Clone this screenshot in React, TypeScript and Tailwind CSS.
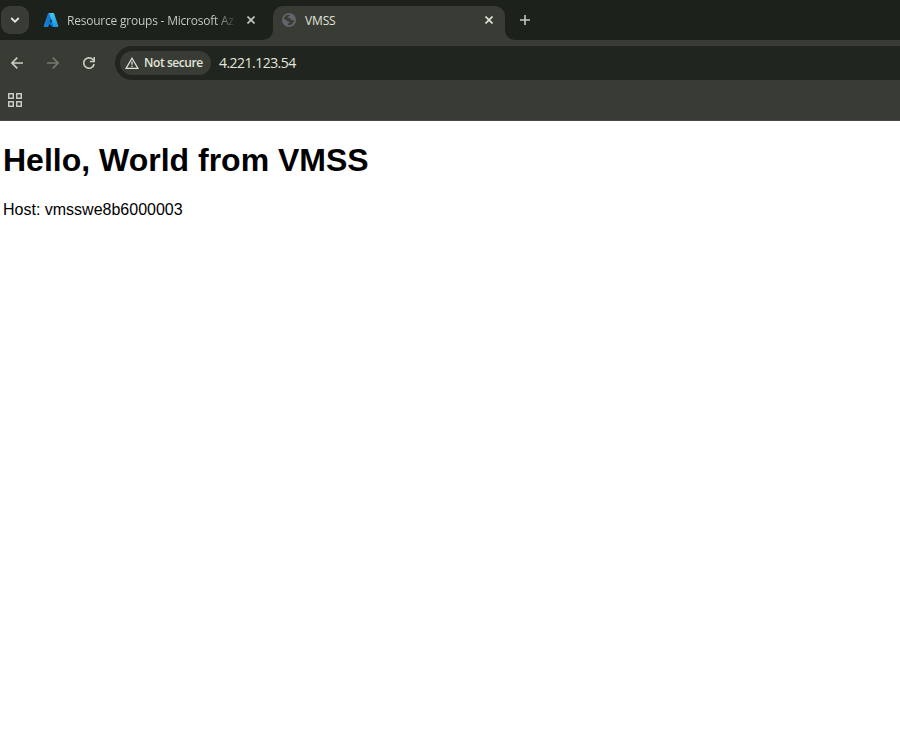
import React from "react";

function AzureLogo() {
  return (
    <svg className="block size-4 shrink-0" viewBox="0 0 96 96">
      <defs>
        <linearGradient id="azLeft" x1="0" y1="0" x2="0" y2="1">
          <stop offset="0" stopColor="#1f6fc0" />
          <stop offset="1" stopColor="#1182dc" />
        </linearGradient>
        <linearGradient id="azRight" x1="0" y1="0" x2="0" y2="1">
          <stop offset="0" stopColor="#3ccbf4" />
          <stop offset="1" stopColor="#2892df" />
        </linearGradient>
      </defs>
      <path fill="url(#azLeft)" d="M33.3 6.5h26L32.3 86.600a4.100 4.100 0 0 1-3.900 2.900H8.100a4.100 4.100 0 0 1-3.900-5.500L29.400 9.300a4.100 4.100 0 0 1 3.900-2.800z" />
      <path fill="#0078d4" d="M71.200 60.300H29.900a1.900 1.900 0 0 0-1.300 3.300l26.500 24.800a4.200 4.200 0 0 0 2.800 1.100h23.400z" />
      <path fill="url(#azRight)" d="M66.600 9.400a4.100 4.100 0 0 0-3.900-2.900H33.600a4.100 4.100 0 0 1 3.900 2.900L62.800 84a4.100 4.100 0 0 1-3.900 5.500H88a4.100 4.100 0 0 0 3.900-5.500z" />
    </svg>
  );
}

function Globe() {
  return (
    <svg className="block size-[14px] shrink-0" viewBox="0 0 14 14">
      <circle cx="7" cy="7" r="7" fill="#60656b" />
      <path
        fill="#383c35"
        d="M1.900 6.200C2 4.200 3.300 2.500 5.200 1.900l2.300-.2c.5.700.1 1.300-.7 1.700-.9.300-1.300.8-.9 1.400.7.400 1.700 0 2.300.6.500.7.300 1.300 1.100 1.500.9.200 2 .1 2.800.5-.2 1.700-1.300 3.200-2.800 4-.9.500-2 .7-3 .6-.6-.4-.4-1.200.2-1.600.7-.3 1.200-.8.900-1.500-.5-.6-1.500-.3-2.200-.7-.6-.5-.5-1.200-1.200-1.500-.7-.3-1.400-.2-2.100-.5z"
      />
    </svg>
  );
}

function Close({ className }: { className: string }) {
  return (
    <svg className={`block size-2 shrink-0 ${className}`} viewBox="0 0 8 8" fill="none" stroke="currentColor" strokeWidth="1.600">
      <path d="M.5.5l7 7M7.500.5l-7 7" />
    </svg>
  );
}

function TabStrip() {
  return (
    <div className="flex h-10 w-full bg-[#1c211b]">
      <button className="mt-1.5 ml-px flex size-7 items-center justify-center rounded-[9px] bg-[#383c35] text-[#e2e5dc]">
        <svg className="block h-[6px] w-2.5" viewBox="0 0 10 6" fill="none" stroke="currentColor" strokeWidth="1.800">
          <path d="M1.200 1L5 4.700 8.800 1" />
        </svg>
      </button>
      <div className="flex h-10 w-[244px] items-center pl-3.5">
        <AzureLogo />
        <div className="ml-2 w-[168px] whitespace-nowrap bg-linear-to-r from-[#cdd2c8] from-88% to-[#343932] bg-clip-text pt-0.5 text-[12px] leading-5 tracking-[-0.220px] text-transparent">
          Resource groups - Microsoft Az
        </div>
        <Close className="ml-3 text-[#c5cac0]" />
      </div>
      <div className="relative mt-1.5 flex h-[34px] w-[232px] items-center rounded-t-[10px] bg-[#383c35] pl-[9px]">
        <svg className="absolute bottom-0 -left-2.5 size-2.5" viewBox="0 0 10 10">
          <path d="M10 0v10H0A10 10 0 0 0 10 0z" fill="#383c35" />
        </svg>
        <svg className="absolute -right-2.5 bottom-0 size-2.5" viewBox="0 0 10 10">
          <path d="M0 0v10h10A10 10 0 0 1 0 0z" fill="#383c35" />
        </svg>
        <div className="flex h-7 w-full items-center self-start">
          <Globe />
          <span className="ml-[9px] w-[180px] pt-0.5 text-[12px] leading-5 tracking-[-0.150px] text-[#e0e3da]">VMSS</span>
          <Close className="text-[#e0e3da]" />
        </div>
      </div>
      <svg className="mt-[15px] ml-[15px] block size-2.5" viewBox="0 0 10 10" fill="none" stroke="#c5cac0" strokeWidth="1.600">
        <path d="M5 0v10M0 5h10" />
      </svg>
    </div>
  );
}

function Toolbar() {
  return (
    <div className="flex h-[46px] items-center bg-[#383c35] text-[#c9cdc3]">
      <svg className="ml-[11px] block size-3" viewBox="0 0 12 12" fill="none" stroke="currentColor" strokeWidth="1.600">
        <path d="M12 6H1M6.300.6L.9 6l5.400 5.400" />
      </svg>
      <svg className="ml-6 block size-3 text-[#747970]" viewBox="0 0 12 12" fill="none" stroke="currentColor" strokeWidth="1.600">
        <path d="M0 6h11M5.700.6L11.100 6l-5.400 5.400" />
      </svg>
      <svg className="ml-6 block size-3" viewBox="0 0 12 12" fill="none" stroke="currentColor" strokeWidth="1.600">
        <path d="M11.100 7A5.200 5.200 0 1 1 9.800 2.500L11 3.700" />
        <path d="M11.200 0v4.500H6.800" />
      </svg>
      <div className="ml-5 flex h-[34px] flex-1 items-center rounded-l-full bg-[#20251f] pl-[5px]">
        <div className="flex h-6 w-[91px] items-center rounded-full bg-[#383c35] pl-[5px] text-[#e2e5dc]">
          <svg className="block h-3 w-3.5 shrink-0" viewBox="0 0 14 12" fill="none" stroke="currentColor">
            <path d="M7 1.200L13 11.400H1z" strokeWidth="1.200" />
            <path d="M7 4.500v3.200M7 8.700V10" strokeWidth="1.300" />
          </svg>
          <span className="ml-[5px] whitespace-nowrap text-[12px] leading-5 font-semibold tracking-[-0.420px]">Not secure</span>
        </div>
        <span className="ml-2 text-[14px] leading-5 tracking-[-0.530px] text-[#e2e5dc]">4.221.123.54</span>
      </div>
    </div>
  );
}

function BookmarksBar() {
  return (
    <div className="flex h-[35px] border-b border-[#4a484a] bg-[#383c35] pt-[7px] pl-2">
      <svg className="block size-3.5" viewBox="0 0 14 14" fill="none" stroke="#c9c9c6" strokeWidth="1.500">
        <path d="M.75.75h4.500v4.500H.75zM8.750.75h4.500v4.500h-4.500zM.75 8.750h4.500v4.500H.75zM8.750 8.750h4.500v4.500h-4.500z" />
      </svg>
    </div>
  );
}

export default function App() {
  return (
    <div className="flex h-[738px] w-[900px] flex-col overflow-hidden bg-white">
      <header className="font-['Open_Sans','Noto_Sans',sans-serif]">
        <TabStrip />
        <Toolbar />
        <BookmarksBar />
      </header>
      <main className="flex-1 pl-[3px] font-['Liberation_Sans',Arial,sans-serif] text-black">
        <h1 className="mt-[21px] text-[32px] leading-[37px] font-bold">Hello, World from VMSS</h1>
        <p className="mt-[22px] text-[16px] leading-[18px]">Host: vmsswe8b6000003</p>
      </main>
    </div>
  );
}
